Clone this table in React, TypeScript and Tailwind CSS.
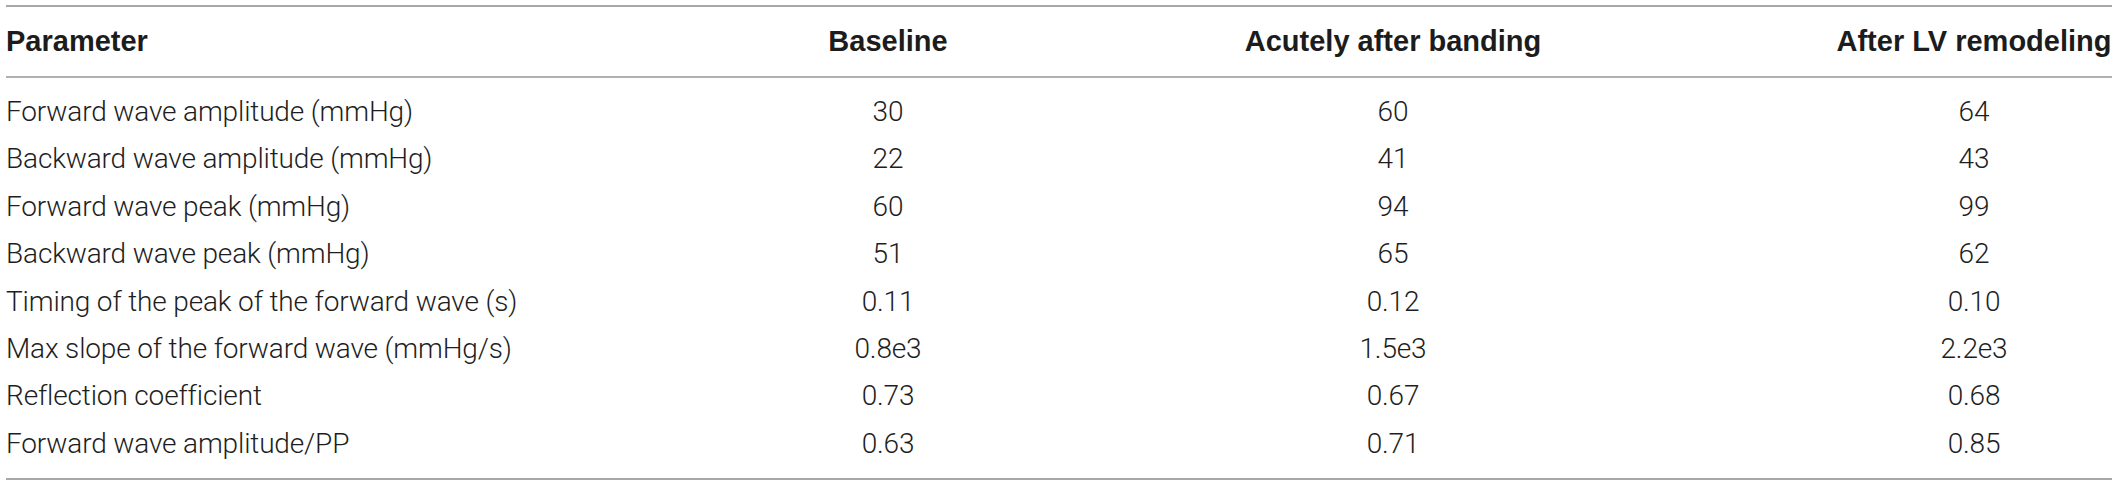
const rows: [string, string, string, string][] = [
  ["Forward wave amplitude (mmHg)", "30", "60", "64"],
  ["Backward wave amplitude (mmHg)", "22", "41", "43"],
  ["Forward wave peak (mmHg)", "60", "94", "99"],
  ["Backward wave peak (mmHg)", "51", "65", "62"],
  ["Timing of the peak of the forward wave (s)", "0.11", "0.12", "0.10"],
  ["Max slope of the forward wave (mmHg/s)", "0.8e3", "1.5e3", "2.2e3"],
  ["Reflection coefficient", "0.73", "0.67", "0.68"],
  ["Forward wave amplitude/PP", "0.63", "0.71", "0.85"],
];

const cols = "grid grid-cols-[820px_124px_886px_276px]";

const App = () => {
  return (
    <div className="w-[2118px] h-[485px] bg-white font-['Liberation_Sans',Arial,sans-serif] text-[#222]">
      <div className="ml-[6px] w-[2106px] pt-[5px]">
        {/* top rule */}
        <div className="h-[2px] bg-[#a8a8a8]" />

        {/* header */}
        <div className={`${cols} h-[69px] items-center text-[29px] font-bold text-[#1c1c1c] leading-none`}>
          <div>Parameter</div>
          <div className="text-center whitespace-nowrap">Baseline</div>
          <div className="text-center whitespace-nowrap">Acutely after banding</div>
          <div className="text-center whitespace-nowrap">After LV remodeling</div>
        </div>

        <div className="h-[2px] bg-[#b0b0b0]" />

        {/* body */}
        <div className="pt-[10px] pb-[11px] font-['Roboto','Liberation_Sans',sans-serif] font-light text-[#1e1e1e] tracking-[-0.15px]">
          {rows.map((r) => (
            <div key={r[0]} className={`${cols} h-[47.375px] items-center text-[28px] leading-[47.375px]`}>
              <div className="whitespace-nowrap">{r[0]}</div>
              <div className="text-center">{r[1]}</div>
              <div className="text-center">{r[2]}</div>
              <div className="text-center">{r[3]}</div>
            </div>
          ))}
        </div>

        <div className="h-[2px] bg-[#a8a8a8]" />
      </div>
    </div>
  );
};

export default App;
